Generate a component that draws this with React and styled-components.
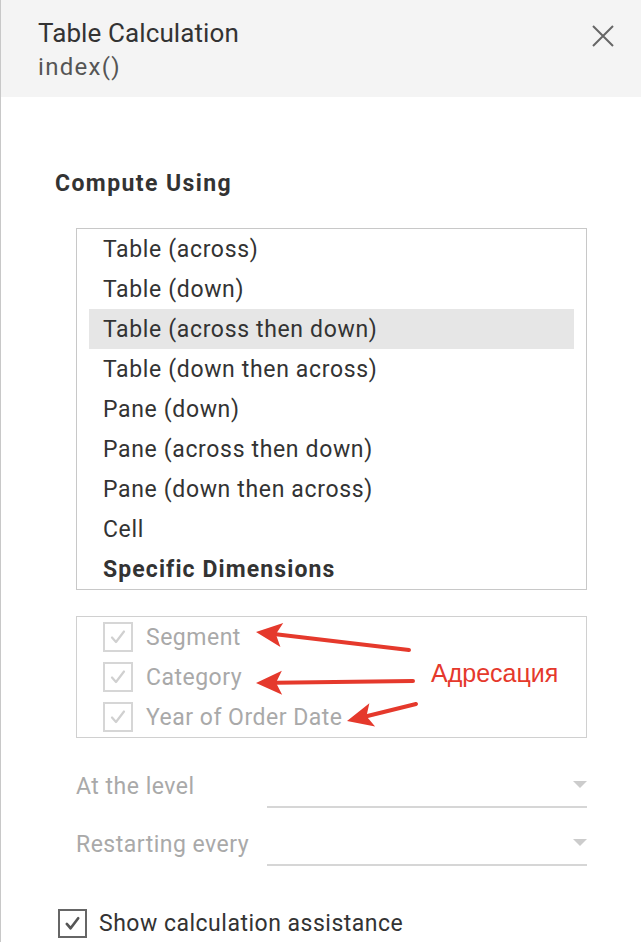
import React from 'react'
import styled, { createGlobalStyle } from 'styled-components'

const GlobalStyle = createGlobalStyle`
    body {
        margin: 0;
        background: #ffffff;
        font-family: Roboto, "Liberation Sans", sans-serif;
    }
`

const Panel = styled.div`
    box-sizing: border-box;
    min-height: 942px;
    border-left: 1px solid #c8c8c8;
    background: #ffffff;
    color: #333333;
`

const Header = styled.header`
    box-sizing: border-box;
    height: 97px;
    padding: 18px 0 0 37px;
    background: #f4f4f4;
    display: flex;
    justify-content: space-between;
    align-items: flex-start;
`

const Title = styled.h1`
    margin: 0;
    font-size: 26px;
    line-height: 30px;
    font-weight: 400;
    letter-spacing: 0.1px;
    color: #333333;
`

const Subtitle = styled.div`
    margin-top: 6px;
    font-size: 24px;
    line-height: 26px;
    letter-spacing: 1.3px;
    color: #555555;
`

const CloseButton = styled.button`
    width: 24px;
    height: 24px;
    margin: 6px 26px 0 0;
    padding: 0;
    border: none;
    background: none;
    cursor: pointer;
`

const Body = styled.div`
    padding: 74px 54px 0 54px;
`

const SectionTitle = styled.h2`
    margin: 0 0 31px 0;
    font-size: 23px;
    line-height: 26px;
    font-weight: 700;
    letter-spacing: 1.4px;
    color: #333333;
`

const ListBox = styled.ul`
    list-style: none;
    margin: 0 0 26px 21px;
    padding: 0;
    border: 1px solid #c8c8c8;
`

const ListItem = styled.li`
    height: 40px;
    margin: 0 12px;
    padding-left: 14px;
    display: flex;
    align-items: center;
    font-size: 23px;
    letter-spacing: ${props => (props.$bold ? '1.1px' : '0.65px')};
    font-weight: ${props => (props.$bold ? 700 : 400)};
    background: ${props => (props.$selected ? '#e6e6e6' : 'transparent')};
    color: #333333;
`

const CheckGroup = styled.div`
    position: relative;
    margin: 0 0 26px 21px;
    border: 1px solid #d0d0d0;
    padding-left: 26px;
`

const CheckRow = styled.label`
    height: 40px;
    display: flex;
    align-items: center;
    gap: ${props => (props.$gap ? props.$gap : 13)}px;
    font-size: 23px;
    letter-spacing: 0.5px;
    color: ${props => (props.$disabled ? '#a9a9a9' : '#333333')};
`

const Box = styled.span`
    box-sizing: border-box;
    width: ${props => props.$size}px;
    height: ${props => props.$size}px;
    border: 2px solid ${props => (props.$disabled ? '#d6d6d6' : '#666666')};
    display: flex;
    align-items: center;
    justify-content: center;
    flex-shrink: 0;
`

const Annotation = styled.svg`
    position: absolute;
    left: 0;
    top: 0;
    overflow: visible;
    pointer-events: none;
`

const AnnotationLabel = styled.span`
    position: absolute;
    left: 354px;
    top: 42px;
    font-family: "Liberation Sans", Arial, sans-serif;
    font-size: 25px;
    line-height: 28px;
    color: #e5392c;
`

const DropRow = styled.div`
    display: flex;
    align-items: center;
    height: 44px;
    margin: 0 0 14px 21px;
`

const DropLabel = styled.span`
    width: 191px;
    font-size: 23px;
    letter-spacing: 0.5px;
    color: #a9a9a9;
`

const DropField = styled.div`
    box-sizing: border-box;
    flex: 1;
    height: 44px;
    border-bottom: 2px solid #d6d6d6;
    display: flex;
    justify-content: flex-end;
    align-items: flex-start;
    padding-top: 17px;
`

const Caret = styled.span`
    width: 0;
    height: 0;
    border-left: 7px solid transparent;
    border-right: 7px solid transparent;
    border-top: 7px solid #cccccc;
`

const Footer = styled.div`
    margin: 37px 0 0 3px;
`

const CheckMark = ({ color, size, weight }) => (
    <svg width={size} height={size} viewBox="0 0 20 20">
        <path d="M4 10.5 L8 15 L16 4.5" fill="none" stroke={color} strokeWidth={weight} strokeLinecap="round" strokeLinejoin="round" />
    </svg>
)

const Checkbox = ({ label, disabled, size = 30, gap }) => (
    <CheckRow $disabled={disabled} $gap={gap}>
        <Box $size={size} $disabled={disabled}>
            <CheckMark color={disabled ? '#d0d0d0' : '#555555'} size={size - 10} weight={disabled ? 2.2 : 2.8} />
        </Box>
        {label}
    </CheckRow>
)

// arrow with a filled head, coordinates relative to the check group
const Arrow = ({ from, to }) => {
    const dx = to[0] - from[0]
    const dy = to[1] - from[1]
    const len = Math.hypot(dx, dy)
    const ux = dx / len
    const uy = dy / len
    const bx = to[0] - ux * 26
    const by = to[1] - uy * 26
    const nx = -uy * 12
    const ny = ux * 12
    const notchX = to[0] - ux * 20
    const notchY = to[1] - uy * 20
    return (
        <g>
            <line x1={from[0]} y1={from[1]} x2={notchX} y2={notchY} stroke="#e5392c" strokeWidth="4" strokeLinecap="round" />
            <polygon
                points={`${to[0]},${to[1]} ${bx + nx},${by + ny} ${notchX},${notchY} ${bx - nx},${by - ny}`}
                fill="#e5392c"
            />
        </g>
    )
}

const computeOptions = [
    'Table (across)',
    'Table (down)',
    'Table (across then down)',
    'Table (down then across)',
    'Pane (down)',
    'Pane (across then down)',
    'Pane (down then across)',
    'Cell',
]

const dimensions = ['Segment', 'Category', 'Year of Order Date']

const App = () => (
    <>
        <GlobalStyle />
        <Panel>
            <Header>
                <div>
                    <Title>Table Calculation</Title>
                    <Subtitle>index()</Subtitle>
                </div>
                <CloseButton aria-label="Close">
                    <svg width="24" height="24" viewBox="0 0 24 24">
                        <path d="M2 2 L22 22 M22 2 L2 22" stroke="#666666" strokeWidth="2" />
                    </svg>
                </CloseButton>
            </Header>
            <Body>
                <SectionTitle>Compute Using</SectionTitle>
                <ListBox>
                    {computeOptions.map(option => (
                        <ListItem key={option} $selected={option === 'Table (across then down)'}>
                            {option}
                        </ListItem>
                    ))}
                    <ListItem $bold>Specific Dimensions</ListItem>
                </ListBox>

                <CheckGroup>
                    {dimensions.map(dim => (
                        <Checkbox key={dim} label={dim} disabled />
                    ))}
                    <Annotation width="510" height="122">
                        <Arrow from={[332, 33]} to={[179, 15]} />
                        <Arrow from={[336, 64]} to={[179, 66]} />
                        <Arrow from={[339, 87]} to={[270, 104]} />
                    </Annotation>
                    <AnnotationLabel>Адресация</AnnotationLabel>
                </CheckGroup>

                <DropRow>
                    <DropLabel>At the level</DropLabel>
                    <DropField>
                        <Caret />
                    </DropField>
                </DropRow>
                <DropRow>
                    <DropLabel>Restarting every</DropLabel>
                    <DropField>
                        <Caret />
                    </DropField>
                </DropRow>

                <Footer>
                    <Checkbox label="Show calculation assistance" size={29} gap={12} />
                </Footer>
            </Body>
        </Panel>
    </>
)

export default App
